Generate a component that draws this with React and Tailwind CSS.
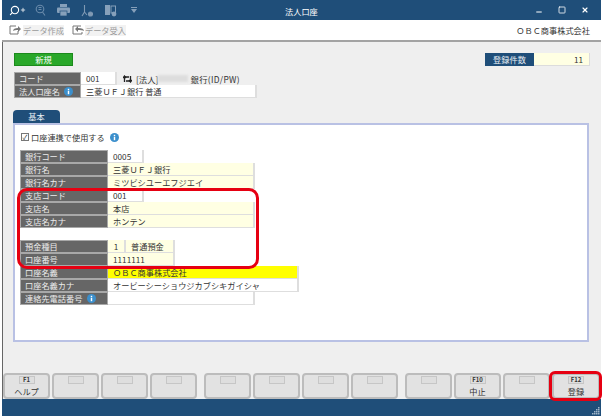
import React from "react";
import { Search, Plus, Minus, Square, X } from "lucide-react";

const font = { fontFamily: '"Noto Sans CJK JP","Liberation Sans",sans-serif' };

function Info({ size = 10 }) {
  return (
    <svg width={size} height={size} viewBox="0 0 10 10" className="shrink-0">
      <circle cx="5" cy="5" r="5" fill="#3b8fcc" />
      <rect x="4.2" y="4.2" width="1.6" height="3.8" fill="#fff" />
      <rect x="4.2" y="2" width="1.6" height="1.5" fill="#fff" />
    </svg>
  );
}

function Label({ children }) {
  return (
    <div className="w-[88px] h-[13px] shrink-0 bg-[#666666] border border-[#a8a8a8] text-[#ececec] text-[8.2px] leading-[11px] pl-[4px] flex items-center gap-[5px] whitespace-nowrap">
      {children}
    </div>
  );
}

function Cell({ children, w, bg = "bg-white", center }) {
  return (
    <div className={`${w} ${bg} ${center ? "justify-center" : "pl-[5px]"} h-[13px] shrink-0 border-r-2 border-b border-[#dedede] flex items-center text-[8.2px] leading-[11px] text-[#333333] whitespace-nowrap`}>
      {children}
    </div>
  );
}

function Row({ label, children }) {
  return (
    <div className="flex h-[13px]">
      <Label>{label}</Label>
      {children}
    </div>
  );
}

function FKey({ k, text, w = "w-[47px]" }) {
  return (
    <div className={`${w} h-[26px] shrink-0 rounded-[4px] border-2 border-[#bcbcbc] bg-[#e2e2e2] flex flex-col items-center pt-[1px]`}>
      <div className="w-[16px] h-[8px] border border-[#c6c6c6] bg-[#dedede] text-[6px] leading-[6px] text-center text-[#333333] font-bold">{k}</div>
      {text ? <div className="text-[8.2px] leading-[12px] text-[#333333] mt-[1px] whitespace-nowrap">{text}</div> : null}
    </div>
  );
}

export default function App() {
  return (
    <div style={font} className="relative w-[602px] h-[418px] bg-white overflow-hidden pl-[2px] pr-[1px] pb-[2px] flex flex-col text-[#333333]">
      <div className="h-[20px] shrink-0 bg-[#1f4e79] flex items-center relative">
        <div className="flex items-center pl-[7px]">
          <div className="flex items-center">
            <Search size={11} strokeWidth={2.4} className="-scale-x-100 text-white" />
            <Plus size={6} strokeWidth={3} className="text-white" />
          </div>
          <svg width="11" height="12" viewBox="0 0 11 12" fill="none" stroke="#6a8bab" strokeWidth="1.1" className="ml-[9px]"><circle cx="5" cy="5" r="3.8" /><path d="M7.5 8 10 11.5" /><path d="M3.5 3.5h3M3.5 5.5h3" /></svg>
          <svg width="13" height="12" viewBox="0 0 13 12" className="ml-[11px]"><rect x="3" y="0" width="7" height="3" fill="#86a0ba" /><rect x="0" y="3.5" width="13" height="5.5" rx="1" fill="#86a0ba" /><rect x="3" y="7" width="7" height="5" fill="#86a0ba" stroke="#1f4e79" strokeWidth="0.7" /></svg>
          <svg width="12" height="13" viewBox="0 0 12 13" fill="none" stroke="#7f99b3" strokeWidth="1.1" className="ml-[11px]"><path d="M3.5 1v7L1 12M3.5 8 6 11" /><circle cx="9.5" cy="10" r="2" fill="#7f99b3" /></svg>
          <svg width="13" height="13" viewBox="0 0 13 13" className="ml-[11px]"><rect x="1" y="1" width="5" height="10" fill="#86a0ba" /><rect x="7" y="2" width="4.5" height="7" fill="none" stroke="#86a0ba" /><circle cx="10" cy="10" r="2.4" fill="#86a0ba" /></svg>
          <svg width="6" height="6" viewBox="0 0 6 6" className="ml-[14px]"><rect y="0" width="6" height="1" fill="#86a0ba" /><path d="M0 2h6L3 6z" fill="#86a0ba" /></svg>
        </div>
        <div className="absolute left-[283px] top-0 h-[20px] leading-[22px] text-[8.2px] text-white">法人口座</div>
        <div className="ml-auto flex items-center gap-[15px] pr-[12px] text-white">
          <Minus size={8} strokeWidth={3} className="translate-y-[2px]" />
          <Square size={8} strokeWidth={2.4} />
          <X size={8} strokeWidth={3.5} />
        </div>
      </div>

      <div className="h-[22px] shrink-0 bg-white border-b-2 border-[#a3a3a3] flex items-center pl-[7px] text-[8.2px] text-[#9a9a9a]">
        <svg width="12" height="10" viewBox="0 0 12 10" fill="none" stroke="#777" strokeWidth="1"><path d="M7 1H1v8h8V6" /><path d="M4 6c0-2 2-3 5-3V1l3 3-3 3V5C7 5 5 5 4 6z" fill="#777" stroke="none" /></svg>
        <span className="ml-[2px] bg-[#f2f2f2] leading-[11px]">データ作成</span>
        <svg width="12" height="10" viewBox="0 0 12 10" fill="none" stroke="#777" strokeWidth="1" className="ml-[8px]"><path d="M9 1H1v8h9V7" /><path d="M12 6c0-2-2-3-6-3V1L3 4l3 3V5c2 0 5 0 6 1z" fill="#777" stroke="none" /></svg>
        <span className="ml-[1px] bg-[#f2f2f2] leading-[11px]">データ受入</span>
        <span className="ml-auto pr-[11px] text-[#333333]">ＯＢＣ商事株式会社</span>
      </div>

      <div className="flex-1 min-h-0 bg-[#efefef] border-l border-[#666666] flex flex-col">
        <div className="h-[11px] shrink-0" />
        <div className="flex justify-between pl-[11px] pr-[11px]">
          <div className="w-[59px] h-[13px] bg-[#2aa82a] border border-[#1c8a1c] text-white text-[8.2px] leading-[11px] text-center">新規</div>
          <div className="flex h-[13px]">
            <div className="w-[49px] bg-[#1f4e79] text-[#e8eef4] text-[8.2px] leading-[13px] text-center">登録件数</div>
            <div className="w-[56px] bg-[#ffffe3] text-[8.2px] leading-[13px] text-right pr-[6px] border-r border-b border-[#dcdcdc]">11</div>
          </div>
        </div>
        <div className="h-[6px] shrink-0" />
        <div className="pl-[11px]">
          <div className="flex h-[13px] items-center">
            <div className="w-[67px] h-[13px] shrink-0 bg-[#666666] border border-[#a8a8a8] text-[#ececec] text-[8.2px] leading-[11px] pl-[4px]">コード</div>
            <div className="w-[36px] h-[13px] bg-white border-r-2 border-b border-[#dedede] text-[8.2px] leading-[12px] pl-[5px]">001</div>
            <svg width="9" height="8" viewBox="0 0 9 8" fill="none" stroke="#222222" strokeWidth="1.3" className="ml-[6px]"><path d="M1.5 7V2H6" /><path d="M0 3l1.5-2L3 3" /><path d="M7.5 1v5H3" /><path d="M6 5l1.5 2L9 5" /></svg>
            <span className="ml-[4px] text-[8.4px] leading-[12px] whitespace-nowrap">[法人]</span>
            <span className="w-[30px] h-[7px] bg-[#dddddd] blur-[1px]" />
            <span className="ml-[2px] text-[8.4px] leading-[12px] whitespace-nowrap tracking-[0.35px]">銀行(ID/PW)</span>
          </div>
          <div className="flex h-[13px]">
            <div className="w-[67px] h-[13px] shrink-0 bg-[#666666] border border-[#a8a8a8] text-[#ececec] text-[8.2px] leading-[11px] pl-[4px] flex items-center gap-[4px]">法人口座名<Info size={9} /></div>
            <div className="w-[176px] h-[13px] bg-white border-r-2 border-b border-[#dedede] text-[8.2px] leading-[12px] pl-[5px]">三菱ＵＦＪ銀行 普通</div>
          </div>
        </div>
        <div className="h-[12px] shrink-0" />
        <div className="ml-[10px] w-[47px] h-[13px] shrink-0 bg-[#1f4e79] rounded-t-[4px] text-[#e8eef4] text-[8.2px] leading-[13px] text-center">基本</div>
        <div className="ml-[10px] w-[576px] h-[219px] shrink-0 bg-white border-2 border-[#b9c1e4] pl-[5px] flex flex-col">
          <div className="h-[14px] mt-[5px] flex items-center pl-[1px] text-[8.2px] whitespace-nowrap">
            <span className="w-[8px] h-[8px] border border-[#777777] bg-white flex items-center justify-center text-[7px] leading-[7px] mr-[2px]">✓</span>
            <span>口座連携で使用する</span>
            <span className="ml-[5px]"><Info size={9} /></span>
          </div>
          <div className="h-[6px] shrink-0" />
          <Row label="銀行コード"><Cell w="w-[36px]">0005</Cell></Row>
          <Row label="銀行名"><Cell w="w-[147px]" bg="bg-[#ffffe3]">三菱ＵＦＪ銀行</Cell></Row>
          <Row label="銀行名カナ"><Cell w="w-[147px]" bg="bg-[#ffffe3]">ミツビシユーエフジエイ</Cell></Row>
          <Row label="支店コード"><Cell w="w-[36px]">001</Cell></Row>
          <Row label="支店名"><Cell w="w-[147px]" bg="bg-[#ffffe3]">本店</Cell></Row>
          <Row label="支店名カナ"><Cell w="w-[147px]" bg="bg-[#ffffe3]">ホンテン</Cell></Row>
          <div className="h-[12px] shrink-0" />
          <Row label="預金種目">
            <Cell w="w-[18px]" bg="bg-[#ffffe3]" center>1</Cell>
            <Cell w="w-[49px]" bg="bg-[#ffffe3]">普通預金</Cell>
          </Row>
          <Row label="口座番号"><Cell w="w-[67px]" bg="bg-[#ffffe3]">1111111</Cell></Row>
          <Row label="口座名義"><Cell w="w-[191px]" bg="bg-[#ffff00]">ＯＢＣ商事株式会社</Cell></Row>
          <Row label="口座名義カナ"><Cell w="w-[191px]">オービーシーショウジカブシキガイシャ</Cell></Row>
          <Row label={<>連絡先電話番号<Info size={9} /></>}><Cell w="w-[147px]"></Cell></Row>
        </div>
        <div className="flex-1" />
        <div className="h-[26px] shrink-0 flex">
          <div className="flex gap-[2px]">
            <FKey k="F1" text="ヘルプ" /><FKey /><FKey /><FKey />
          </div>
          <div className="flex gap-[2px] ml-[7px]">
            <FKey /><FKey /><FKey /><FKey />
          </div>
          <div className="flex gap-[2px] ml-[7px]">
            <FKey /><FKey k="F10" text="中止" /><FKey /><FKey k="F12" text="登録" w="w-[48px]" />
          </div>
        </div>
      </div>
      <div className="h-[17px] shrink-0 bg-[#1f4e79] relative">
        <svg width="8" height="8" viewBox="0 0 8 8" className="absolute right-[1px] bottom-[1px]"><g fill="#9fb4c8"><rect x="6" y="0" width="1.5" height="1.5" /><rect x="4" y="2" width="1.5" height="1.5" /><rect x="6" y="2" width="1.5" height="1.5" /><rect x="2" y="4" width="1.5" height="1.5" /><rect x="4" y="4" width="1.5" height="1.5" /><rect x="6" y="4" width="1.5" height="1.5" /><rect x="0" y="6" width="1.5" height="1.5" /><rect x="2" y="6" width="1.5" height="1.5" /><rect x="4" y="6" width="1.5" height="1.5" /><rect x="6" y="6" width="1.5" height="1.5" /></g></svg>
      </div>
      <div className="absolute left-[17px] top-[188px] w-[242px] h-[81px] rounded-[10px] border-[3px] border-[#e60012]" />
      <div className="absolute left-[549px] top-[371px] w-[53px] h-[30px] rounded-[6px] border-[3px] border-[#e60012]" />
    </div>
  );
}
